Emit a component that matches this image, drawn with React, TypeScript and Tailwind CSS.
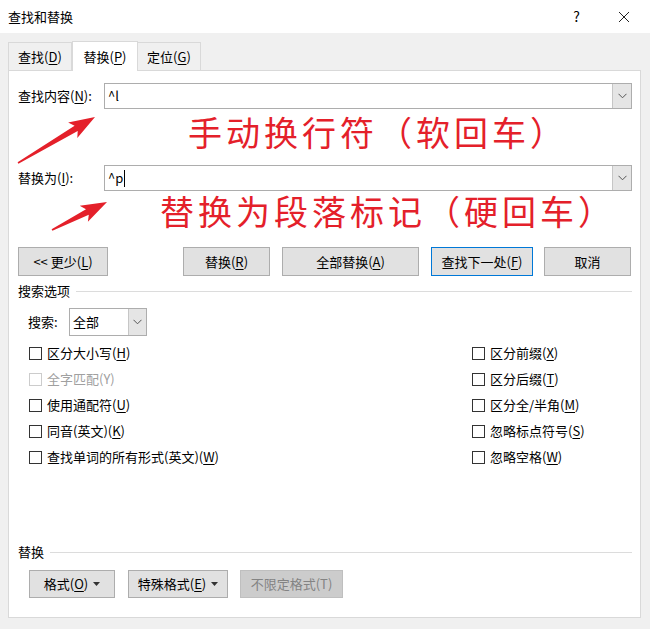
import React from 'react';

function U({ children }: { children: React.ReactNode }) {
  return <span className="underline underline-offset-[2px] decoration-1">{children}</span>;
}

function arrowPoints(x1: number, y1: number, x2: number, y2: number) {
  const len = Math.hypot(x2 - x1, y2 - y1);
  const dx = (x2 - x1) / len;
  const dy = (y2 - y1) / len;
  const nx = -dy;
  const ny = dx;
  const head = 22;
  const bx = x2 - dx * head;
  const by = y2 - dy * head;
  const wx = bx - dx * 4;
  const wy = by - dy * 4;
  const pts: [number, number][] = [
    [x1 + nx * 0.8, y1 + ny * 0.8],
    [bx + nx * 3, by + ny * 3],
    [wx + nx * 9, wy + ny * 9],
    [x2, y2],
    [wx - nx * 9, wy - ny * 9],
    [bx - nx * 3, by - ny * 3],
    [x1 - nx * 0.8, y1 - ny * 0.8],
  ];
  return pts.map(([a, b]) => `${a.toFixed(1)},${b.toFixed(1)}`).join(' ');
}

function Chevron() {
  return (
    <svg width="9" height="6" viewBox="0 0 9 6" className="text-[#555]">
      <polyline points="0.5,0.8 4.5,4.8 8.5,0.8" fill="none" stroke="currentColor" strokeWidth="1" />
    </svg>
  );
}

function Caret() {
  return (
    <svg width="7" height="4" viewBox="0 0 7 4" className="ml-[5px]">
      <polygon points="0,0 7,0 3.5,4" fill="#333" />
    </svg>
  );
}

function Combo({ value, cursor }: { value: string; cursor?: boolean }) {
  return (
    <div className="flex-1 h-[26px] border border-[#adadad] bg-white flex items-stretch">
      <div className="flex-1 flex items-center pl-[3px] text-[13px] text-black">
        {value}
        {cursor && <span className="inline-block w-px h-[17px] bg-black ml-px" />}
      </div>
      <div className="w-[19px] bg-[#e5e5e5] border-l border-[#c6c6c6] flex items-center justify-center">
        <Chevron />
      </div>
    </div>
  );
}

function Btn({
  w,
  children,
  primary,
  disabled,
  className = '',
}: {
  w: string;
  children: React.ReactNode;
  primary?: boolean;
  disabled?: boolean;
  className?: string;
}) {
  const tone = disabled
    ? 'bg-[#cccccc] border-[#bfbfbf] text-[#838383]'
    : primary
      ? 'bg-[#e1e1e1] border-[#0078d7] text-black'
      : 'bg-[#e1e1e1] border-[#adadad] text-black';
  return (
    <div className={`${w} h-full border flex items-center justify-center text-[13px] ${tone} ${className}`}>
      {children}
    </div>
  );
}

function Check({ label, disabled }: { label: React.ReactNode; disabled?: boolean }) {
  return (
    <div className="h-[26px] flex items-center">
      <span
        className={`w-[13px] h-[13px] border bg-white ${disabled ? 'border-[#cccccc]' : 'border-[#333333]'}`}
      />
      <span className={`ml-[5px] text-[13px] ${disabled ? 'text-[#a0a0a0]' : 'text-black'}`}>{label}</span>
    </div>
  );
}

function GroupLabel({ text }: { text: string }) {
  return (
    <div className="h-[20px] flex items-center text-[13px] text-black">
      <span>{text}</span>
      <span className="flex-1 h-px bg-[#dcdcdc] ml-[6px]" />
    </div>
  );
}

export default function App() {
  return (
    <div className="relative w-[650px] h-[629px] overflow-hidden bg-[#f0f0f0] font-['Microsoft_YaHei','Noto_Sans_CJK_SC',sans-serif] text-black">
      {/* 标题栏 */}
      <div className="h-[33px] bg-white flex items-center pl-[8px] text-[13px]">
        <span>查找和替换</span>
        <span className="ml-auto mr-[38px] text-[14px]">?</span>
        <svg width="12" height="12" viewBox="0 0 12 12" className="mr-[20px]">
          <path d="M1 1 L11 11 M11 1 L1 11" stroke="#222" strokeWidth="1" />
        </svg>
      </div>

      {/* 选项卡 */}
      <div className="flex items-end h-[37px] pl-[8px] relative z-10">
        <div className="w-[64px] h-[28px] bg-[#f0f0f0] border border-b-0 border-[#d9d9d9] flex items-center justify-center text-[13px]">
          查找(<U>D</U>)
        </div>
        <div className="w-[66px] h-[30px] -mb-px bg-white border border-b-0 border-[#d9d9d9] flex items-center justify-center text-[13px]">
          替换(<U>P</U>)
        </div>
        <div className="w-[63px] h-[28px] bg-[#f0f0f0] border border-b-0 border-l-0 border-[#d9d9d9] flex items-center justify-center text-[13px]">
          定位(<U>G</U>)
        </div>
      </div>

      {/* 面板 */}
      <div className="ml-[8px] w-[633px] h-[548px] bg-white border border-[#d9d9d9] flex flex-col pl-[9px] pr-[8px] pt-[12px] pb-[19px]">
        <div className="h-[26px] flex items-center">
          <span className="w-[86px] text-[13px]">
            查找内容(<U>N</U>):
          </span>
          <Combo value="^l" />
        </div>
        <div className="h-[56px] pt-[3px] pl-[170px] text-[34px] leading-[40px] tracking-[4px] text-[#e4202a] whitespace-nowrap">
          手动换行符（软回车）
        </div>
        <div className="h-[26px] flex items-center">
          <span className="w-[86px] text-[13px]">
            替换为(<U>I</U>):
          </span>
          <Combo value="^p" cursor />
        </div>
        <div className="h-[56px] pl-[142px] text-[34px] leading-[40px] tracking-[4px] text-[#e4202a] whitespace-nowrap">
          替换为段落标记（硬回车）
        </div>

        <div className="h-[29px] flex">
          <Btn w="w-[90px]">
            &lt;&lt; 更少(<U>L</U>)
          </Btn>
          <Btn w="w-[87px]" className="ml-[75px]">
            替换(<U>R</U>)
          </Btn>
          <Btn w="w-[137px]" className="ml-[12px]">
            全部替换(<U>A</U>)
          </Btn>
          <Btn w="w-[102px]" primary className="ml-[12px]">
            查找下一处(<U>F</U>)
          </Btn>
          <Btn w="w-[87px]" className="ml-[11px]">
            取消
          </Btn>
        </div>

        <div className="mt-[5px]">
          <GroupLabel text="搜索选项" />
        </div>

        <div className="mt-[7px] h-[28px] flex items-center pl-[10px]">
          <span className="w-[41px] text-[13px]">搜索:</span>
          <div className="w-[78px] h-full border border-[#adadad] bg-white flex items-stretch">
            <div className="flex-1 flex items-center pl-[3px] text-[13px]">全部</div>
            <div className="w-[18px] bg-[#e5e5e5] border-l border-[#c6c6c6] flex items-center justify-center">
              <Chevron />
            </div>
          </div>
        </div>

        <div className="mt-[4px] flex pl-[11px]">
          <div className="w-[443px] flex flex-col">
            <Check label={<>区分大小写(<U>H</U>)</>} />
            <Check label="全字匹配(Y)" disabled />
            <Check label={<>使用通配符(<U>U</U>)</>} />
            <Check label={<>同音(英文)(<U>K</U>)</>} />
            <Check label={<>查找单词的所有形式(英文)(<U>W</U>)</>} />
          </div>
          <div className="flex flex-col">
            <Check label={<>区分前缀(<U>X</U>)</>} />
            <Check label={<>区分后缀(<U>T</U>)</>} />
            <Check label={<>区分全/半角(<U>M</U>)</>} />
            <Check label={<>忽略标点符号(<U>S</U>)</>} />
            <Check label={<>忽略空格(<U>W</U>)</>} />
          </div>
        </div>

        <div className="flex-1" />

        <GroupLabel text="替换" />
        <div className="mt-[8px] h-[28px] flex pl-[11px]">
          <Btn w="w-[86px]">
            格式(<U>O</U>)
            <Caret />
          </Btn>
          <Btn w="w-[100px]" className="ml-[13px]">
            特殊格式(<U>E</U>)
            <Caret />
          </Btn>
          <Btn w="w-[103px]" disabled className="ml-[12px]">
            不限定格式(T)
          </Btn>
        </div>
      </div>

      {/* 红色箭头标注 */}
      <svg width="650" height="629" className="absolute left-0 top-0 pointer-events-none">
        <polygon points={arrowPoints(18, 163, 95, 117)} fill="#e4202a" />
        <polygon points={arrowPoints(52, 230, 107, 202)} fill="#e4202a" />
      </svg>
    </div>
  );
}
